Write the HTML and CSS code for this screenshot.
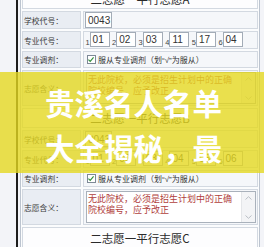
FILE: index.html
```html
<!DOCTYPE html>
<html lang="zh-CN">
<head>
<meta charset="utf-8">
<title>二志愿</title>
<link rel="stylesheet" href="styles.css">
</head>
<body>
<div class="page">
  <div class="rail"></div>
  <div class="line"></div>
  <div class="form">
    <div class="head">二志愿一平行志愿A</div>
    <div class="lab">学校代号：</div>
    <div class="val"><span class="box school">0043</span></div>
    <div class="lab">专业代号：</div>
    <div class="val codes">
      <span class="n">1</span><span class="box code">01</span>
      <span class="n">2</span><span class="box code">02</span>
      <span class="n">3</span><span class="box code">03</span>
      <span class="n">4</span><span class="box code">11</span>
      <span class="n">5</span><span class="box code">17</span>
      <span class="n">6</span><span class="box code">04</span>
    </div>
    <div class="lab">专业调剂：</div>
    <div class="val"><span class="chk"><svg viewBox="0 0 9 9" width="9" height="9"><path d="M1.6 4.6 L3.6 6.6 L7.4 2.2" fill="none" stroke="#2f8f3a" stroke-width="1.3"/></svg></span><span class="chktxt">服从专业调剂（划“√”为服从）</span></div>
    <div class="lab">志愿含义：</div>
    <div class="val"><div class="ta"><div class="tatext">无此院校，必须是招生计划中的正确<br>院校编号，应予改正</div><div class="sb"><svg viewBox="0 0 7 4" width="7" height="4"><path d="M0.5 3.5 L3.5 0.7 L6.5 3.5" fill="none" stroke="#b9bec5" stroke-width="1"/></svg><svg viewBox="0 0 7 4" width="7" height="4"><path d="M0.5 0.5 L3.5 3.3 L6.5 0.5" fill="none" stroke="#b9bec5" stroke-width="1"/></svg></div></div></div>

    <div class="head">二志愿一平行志愿B</div>
    <div class="lab">学校代号：</div>
    <div class="val"><span class="box school">0043</span></div>
    <div class="lab">专业代号：</div>
    <div class="val codes">
      <span class="n">1</span><span class="box code">01</span>
      <span class="n">2</span><span class="box code">02</span>
      <span class="n">3</span><span class="box code">03</span>
      <span class="n">4</span><span class="box code">04</span>
      <span class="n">5</span><span class="box code">05</span>
      <span class="n">6</span><span class="box code">06</span>
    </div>
    <div class="lab">专业调剂：</div>
    <div class="val"><span class="chk"><svg viewBox="0 0 9 9" width="9" height="9"><path d="M1.6 4.6 L3.6 6.6 L7.4 2.2" fill="none" stroke="#2f8f3a" stroke-width="1.3"/></svg></span><span class="chktxt">服从专业调剂（划“√”为服从）</span></div>
    <div class="lab">志愿含义：</div>
    <div class="val"><div class="ta"><div class="tatext">无此院校，必须是招生计划中的正确<br>院校编号，应予改正</div><div class="sb"><svg viewBox="0 0 7 4" width="7" height="4"><path d="M0.5 3.5 L3.5 0.7 L6.5 3.5" fill="none" stroke="#b9bec5" stroke-width="1"/></svg><svg viewBox="0 0 7 4" width="7" height="4"><path d="M0.5 0.5 L3.5 3.3 L6.5 0.5" fill="none" stroke="#b9bec5" stroke-width="1"/></svg></div></div></div>

    <div class="head">二志愿一平行志愿C</div>
  </div>
</div>
<div class="banner"><div class="title">贵溪名人名单<br>大全揭秘，最</div></div>
</body>
</html>
```

FILE: styles.css
```css
html, body {
  margin: 0;
  padding: 0;
}
body {
  width: 264px;
  height: 247px;
  overflow: hidden;
  background: #f3f4f8;
  font-family: "Liberation Sans", "Noto Sans CJK SC", sans-serif;
  color: #333;
  position: relative;
}
.page {
  display: flex;
  align-items: flex-start;
}
.rail {
  width: 16px;
  flex: none;
}
.line {
  width: 2px;
  height: 260px;
  background: #1c1c1c;
  flex: none;
  margin-right: 2px;
}
.form {
  flex: 1;
  margin-top: -13px;
  margin-right: 4px;
  border: 1px solid #bcc4cf;
  padding: 1px;
  background: #fbfcfd;
  display: grid;
  grid-template-columns: 59px 1fr;
  grid-template-rows: repeat(2, 20px 18px 18px 17px 36px) 22px;
  gap: 2px;
}
.head, .lab, .val {
  box-sizing: border-box;
  border: 1px solid #d3d9e1;
}
.head {
  grid-column: 1 / -1;
  background: #fdfdfe;
  display: flex;
  align-items: center;
  justify-content: center;
  font-family: "Noto Sans CJK SC", sans-serif;
  font-size: 11.5px;
  color: #2a2a2a;
}
.lab {
  background: #e9edf3;
  display: flex;
  align-items: center;
  padding-left: 1px;
  font-family: "Noto Sans CJK SC", sans-serif;
  font-size: 7.8px;
  color: #3a3a3a;
}
.val {
  background: #f5f7fa;
  display: flex;
  align-items: center;
  padding-left: 1px;
  min-width: 0;
}
.box {
  box-sizing: border-box;
  background: #fff;
  border: 1px solid #a3acb7;
  font-size: 10px;
  color: #333;
  padding-left: 2px;
  display: flex;
  align-items: center;
}
.school {
  width: 27px;
  height: 16px;
}
.codes {
  padding-left: 0;
  align-items: flex-end;
  padding-bottom: 1px;
}
.n {
  width: 5.6px;
  text-align: right;
  font-size: 7.5px;
  color: #444;
  line-height: 9px;
}
.code {
  width: 20px;
  height: 15px;
  margin-right: 1px;
}
.chk {
  box-sizing: border-box;
  width: 9px;
  height: 9px;
  border: 1px solid #7d8996;
  background: #fff;
  display: flex;
  margin: 0 2px 0 2px;
}
.chk svg {
  margin: -1px 0 0 -1px;
}
.chktxt {
  font-size: 8px;
  color: #333;
  white-space: nowrap;
}
.ta {
  box-sizing: border-box;
  flex: 1;
  height: 32px;
  margin: 0 1px 0 1px;
  border: 1px solid #a9b1bb;
  background: #fff;
  display: flex;
}
.tatext {
  flex: 1;
  padding: 2px 0 0 1px;
  font-family: "Noto Sans CJK SC", sans-serif;
  font-size: 9px;
  line-height: 10.5px;
  color: #b0403c;
  white-space: nowrap;
  overflow: hidden;
}
.sb {
  width: 13px;
  background: #f3f4f6;
  border-left: 1px solid #e4e6e9;
  display: flex;
  flex-direction: column;
  justify-content: space-between;
  align-items: center;
  padding: 4px 0 3px;
}
.banner {
  position: absolute;
  left: 0;
  right: 0;
  top: 72px;
  height: 101px;
  background: rgba(229, 216, 32, 0.8);
}
.title {
  position: absolute;
  left: 45px;
  top: 8px;
  font-family: "Noto Sans CJK SC", sans-serif;
  font-weight: 700;
  font-size: 29.5px;
  line-height: 45px;
  color: #fff;
  white-space: nowrap;
}
```
